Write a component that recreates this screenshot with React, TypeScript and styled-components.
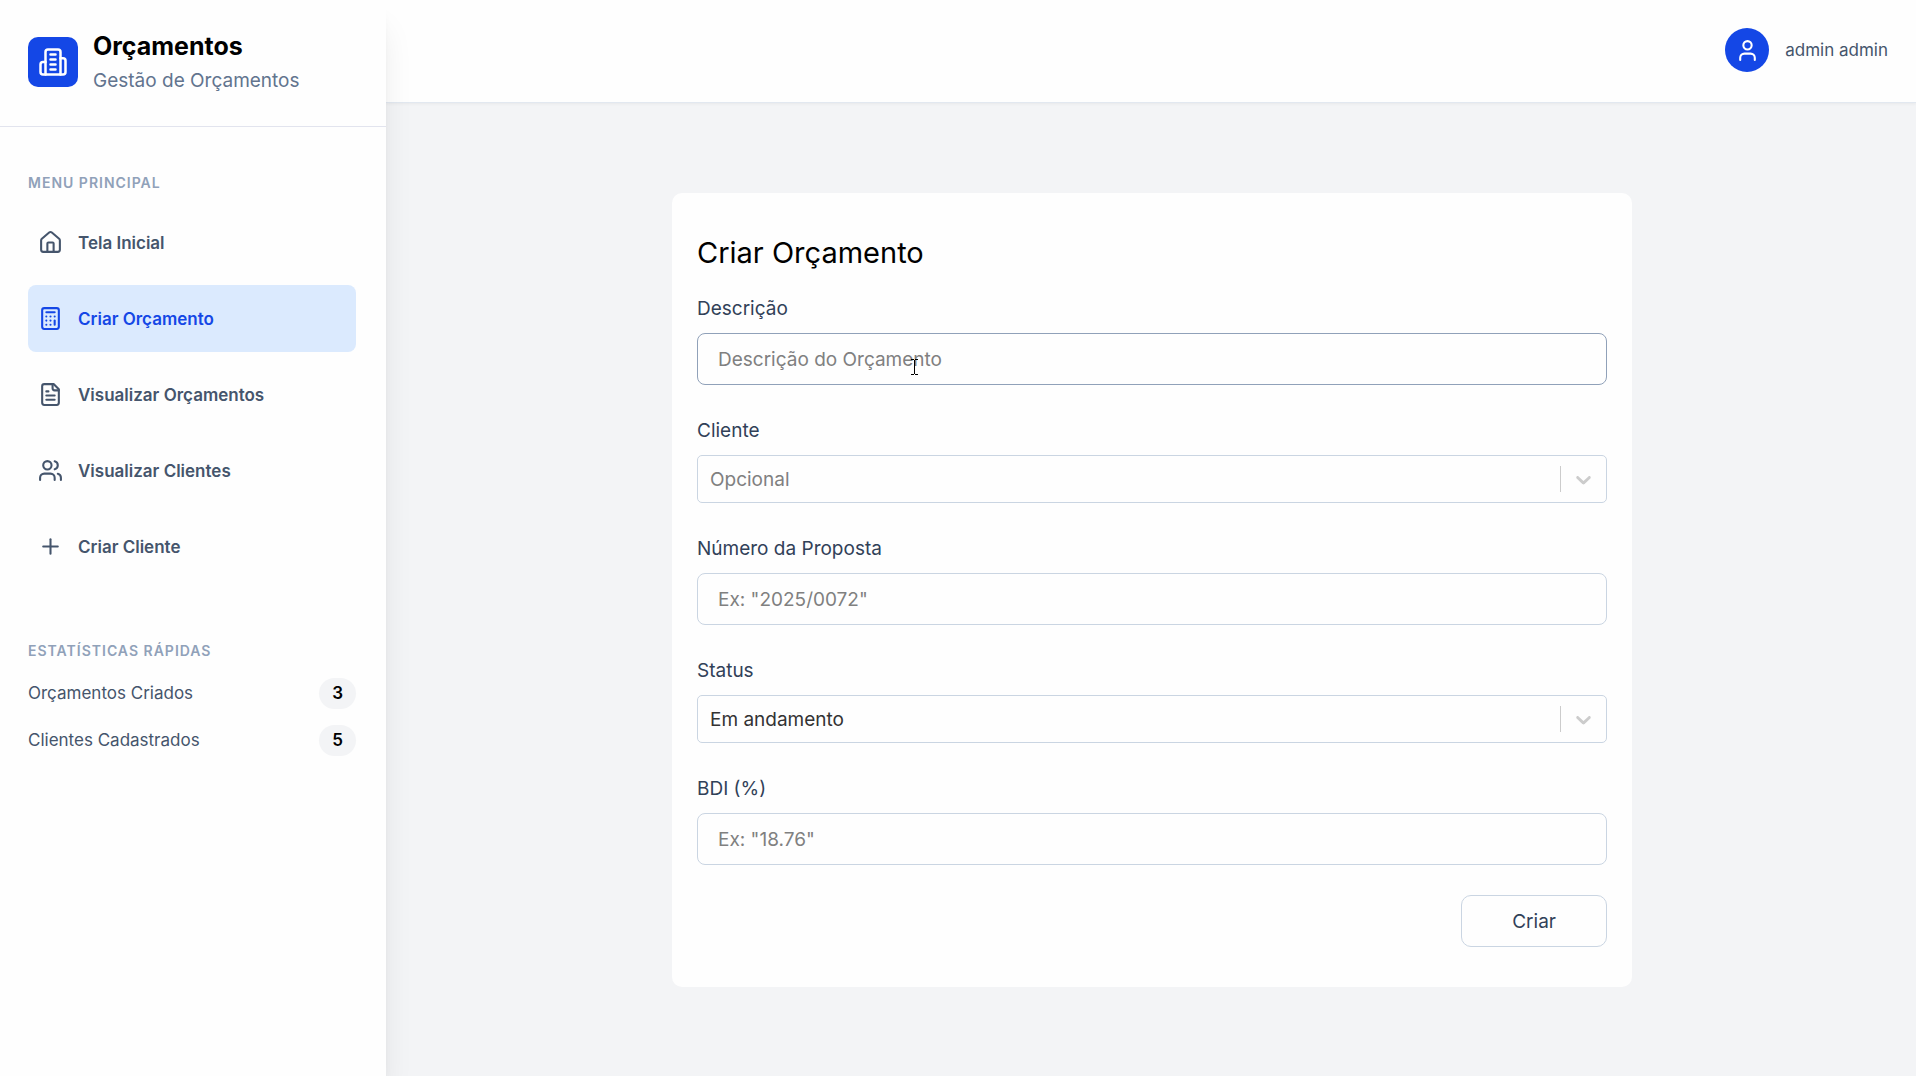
import React, { useId } from "react";
import styled, { createGlobalStyle } from "styled-components";
import { User, House, Calculator, Users, Plus } from "lucide-react";

const GlobalStyle = createGlobalStyle`
  *, *::before, *::after { box-sizing: border-box; }
  body {
    margin: 0;
    background: #f3f4f6;
    color: #000;
    font-family: Inter, "Liberation Sans", sans-serif;
    font-size: 19px;
  }
  button, input, select { font: inherit; }
  h1, h2, p, ul { margin: 0; padding: 0; }
  ul { list-style: none; }
`;

const Layout = styled.div`
  display: flex;
  min-height: 100vh;
`;

const Sidebar = styled.aside`
  position: relative;
  flex: 0 0 386px;
  background: #fefefe;
  box-shadow: 0 25px 31px -6px rgba(0, 0, 0, 0.1), 0 10px 12px -7px rgba(0, 0, 0, 0.1);
`;

const Brand = styled.div`
  display: flex;
  align-items: center;
  gap: 15px;
  padding: 27px 28px 29px;
  border-bottom: 1px solid #e2e4ee;
`;

const Logo = styled.div`
  display: grid;
  place-items: center;
  width: 50px;
  height: 50px;
  border-radius: 10px;
  background: #1447e6;
  color: #fff;
`;

const BrandName = styled.p`
  font-size: 25px;
  font-weight: 700;
  line-height: 38px;
`;

const BrandTagline = styled.p`
  color: #62748e;
  font-size: 19px;
  line-height: 32px;
`;

const Section = styled.section<{ $top: number }>`
  padding: ${(p) => p.$top}px 30px 0 28px;
`;

const SectionTitle = styled.h2`
  color: #90a1b9;
  font-size: 14px;
  font-weight: 600;
  line-height: 20px;
  letter-spacing: 1px;
  text-transform: uppercase;
`;

const Menu = styled.ul`
  display: flex;
  flex-direction: column;
  gap: 9px;
  padding-top: 16px;
`;

const MenuLink = styled.a<{ $active?: boolean }>`
  display: flex;
  align-items: center;
  gap: 15px;
  height: 67px;
  padding: 0 10px;
  border-radius: 8px;
  background: ${(p) => (p.$active ? "#dbeafe" : "transparent")};
  color: ${(p) => (p.$active ? "#1447e6" : "#45556c")};
  font-size: 17px;
  font-weight: 600;
  text-decoration: none;
`;

const StatList = styled.ul`
  display: flex;
  flex-direction: column;
  gap: 16px;
  padding-top: 17px;
`;

const Stat = styled.li`
  display: flex;
  align-items: center;
  justify-content: space-between;
  color: #45556c;
  font-size: 17px;
  line-height: 25px;
`;

const Badge = styled.span`
  padding: 3px 13px;
  border-radius: 16px;
  background: #f3f4f6;
  color: #000;
  font-weight: 600;
`;

const Content = styled.div`
  flex: 1;
  min-width: 0;
`;

const TopBar = styled.header`
  display: flex;
  justify-content: flex-end;
  align-items: center;
  gap: 16px;
  padding: 28px 28px 30px;
  border-bottom: 1px solid #e2e8f0;
  background: #fefefe;
  box-shadow: 0 1px 3px rgba(0, 0, 0, 0.05);
`;

const Avatar = styled.div`
  display: grid;
  place-items: center;
  width: 44px;
  height: 44px;
  border-radius: 50%;
  background: #1447e6;
  color: #fff;
`;

const UserName = styled.span`
  color: #45556c;
  font-size: 17px;
`;

const Main = styled.main`
  padding: 90px 24px 90px 26px;
`;

const Card = styled.form`
  max-width: 960px;
  margin: 0 auto;
  padding: 40px 25px;
  border-radius: 10px;
  background: #fefefe;
`;

const Title = styled.h1`
  margin-bottom: 20px;
  font-size: 29px;
  font-weight: 400;
  line-height: 40px;
`;

const Field = styled.div`
  display: flex;
  flex-direction: column;
  gap: 8px;
  margin-bottom: 30px;
`;

const Label = styled.label`
  color: #314158;
  line-height: 32px;
`;

const InputWrap = styled.div`
  position: relative;
`;

const Input = styled.input<{ $hovered?: boolean }>`
  display: block;
  width: 100%;
  height: 52px;
  padding: 0 20px;
  border: 1px solid ${(p) => (p.$hovered ? "#90a1b9" : "#cad5e2")};
  border-radius: 8px;
  outline: none;
  background: transparent;
  color: #314158;
  &::placeholder { color: #808080; opacity: 1; }
`;

const TextCursor = styled.svg`
  position: absolute;
  left: 214px;
  top: 26px;
  pointer-events: none;
`;

const SelectBox = styled.div`
  display: grid;
  grid-template-columns: 1fr 46px;
  align-items: center;
  height: 48px;
  border: 1px solid #cad5e2;
  border-radius: 5px;
`;

const Select = styled.select<{ $muted?: boolean }>`
  grid-area: 1 / 1 / 2 / 3;
  width: 100%;
  height: 100%;
  padding: 0 60px 0 12px;
  border: 0;
  outline: none;
  appearance: none;
  background: transparent;
  color: ${(p) => (p.$muted ? "#808080" : "#333")};
`;

const Indicator = styled.span`
  grid-area: 1 / 2 / 2 / 3;
  display: grid;
  place-items: center;
  height: 26px;
  border-left: 1px solid #ccc;
  color: #ccc;
  pointer-events: none;
`;

const Actions = styled.div`
  display: flex;
  justify-content: flex-end;
`;

const SubmitButton = styled.button`
  height: 52px;
  padding: 0 50px;
  border: 1px solid #cad5e2;
  border-radius: 10px;
  background: transparent;
  color: #314158;
`;

const BuildingIcon = () => (
  <svg width="30" height="30" viewBox="0 0 24 24" fill="none" stroke="currentColor" strokeWidth="2" strokeLinecap="round" strokeLinejoin="round" aria-hidden="true">
    <path d="M6 22V4a2 2 0 0 1 2-2h8a2 2 0 0 1 2 2v18Z" />
    <path d="M6 12H4a2 2 0 0 0-2 2v6a2 2 0 0 0 2 2h2" />
    <path d="M18 9h2a2 2 0 0 1 2 2v9a2 2 0 0 1-2 2h-2" />
    <path d="M10 6h4M10 10h4M10 14h4M10 18h4" />
  </svg>
);

const FileIcon = () => (
  <svg width="25" height="25" viewBox="0 0 24 24" fill="none" stroke="currentColor" strokeWidth="2" strokeLinecap="round" strokeLinejoin="round" aria-hidden="true">
    <path d="M15 2H6a2 2 0 0 0-2 2v16a2 2 0 0 0 2 2h12a2 2 0 0 0 2-2V7Z" />
    <path d="M14 2v4a2 2 0 0 0 2 2h4M10 9H8M16 13H8M16 17H8" />
  </svg>
);

const ChevronIcon = () => (
  <svg width="25" height="25" viewBox="0 0 20 20" fill="currentColor" aria-hidden="true">
    <path d="M4.516 7.548c0.436-0.446 1.043-0.481 1.576 0l3.908 3.747 3.908-3.747c0.533-0.481 1.141-0.446 1.574 0 0.436 0.445 0.408 1.197 0 1.615-0.406 0.418-4.695 4.502-4.695 4.502-0.217 0.223-0.502 0.335-0.787 0.335s-0.57-0.112-0.789-0.335c0 0-4.287-4.084-4.695-4.502s-0.436-1.17 0-1.615z" />
  </svg>
);

const menuItems = [
  { label: "Tela Inicial", icon: <House size={25} /> },
  { label: "Criar Orçamento", icon: <Calculator size={25} />, active: true },
  { label: "Visualizar Orçamentos", icon: <FileIcon /> },
  { label: "Visualizar Clientes", icon: <Users size={25} /> },
  { label: "Criar Cliente", icon: <Plus size={25} /> },
];

const stats = [
  { label: "Orçamentos Criados", value: 3 },
  { label: "Clientes Cadastrados", value: 5 },
];

function TextField({ label, placeholder, hovered }: { label: string; placeholder: string; hovered?: boolean }) {
  const id = useId();
  return (
    <Field>
      <Label htmlFor={id}>{label}</Label>
      <InputWrap>
        <Input id={id} type="text" placeholder={placeholder} $hovered={hovered} />
        {hovered && (
          <TextCursor width="7" height="16" viewBox="0 0 7 16" fill="none" stroke="#000" aria-hidden="true">
            <path d="M0 .5h3M4 .5h3M3.500 1v14M0 15.500h3M4 15.500h3" />
          </TextCursor>
        )}
      </InputWrap>
    </Field>
  );
}

function SelectField({ label, option, muted }: { label: string; option: string; muted?: boolean }) {
  const id = useId();
  return (
    <Field>
      <Label htmlFor={id}>{label}</Label>
      <SelectBox>
        <Select id={id} $muted={muted}>
          <option>{option}</option>
        </Select>
        <Indicator>
          <ChevronIcon />
        </Indicator>
      </SelectBox>
    </Field>
  );
}

export default function App() {
  return (
    <>
      <GlobalStyle />
      <Layout>
        <Sidebar>
          <Brand>
            <Logo>
              <BuildingIcon />
            </Logo>
            <div>
              <BrandName>Orçamentos</BrandName>
              <BrandTagline>Gestão de Orçamentos</BrandTagline>
            </div>
          </Brand>
          <Section as="nav" $top={46}>
            <SectionTitle>Menu Principal</SectionTitle>
            <Menu>
              {menuItems.map((item) => (
                <li key={item.label}>
                  <MenuLink href="#" $active={item.active} aria-current={item.active ? "page" : undefined}>
                    {item.icon}
                    {item.label}
                  </MenuLink>
                </li>
              ))}
            </Menu>
          </Section>
          <Section $top={61}>
            <SectionTitle>Estatísticas Rápidas</SectionTitle>
            <StatList>
              {stats.map((stat) => (
                <Stat key={stat.label}>
                  {stat.label}
                  <Badge>{stat.value}</Badge>
                </Stat>
              ))}
            </StatList>
          </Section>
        </Sidebar>
        <Content>
          <TopBar>
            <Avatar>
              <User size={25} />
            </Avatar>
            <UserName>admin admin</UserName>
          </TopBar>
          <Main>
            <Card onSubmit={(e) => e.preventDefault()}>
              <Title>Criar Orçamento</Title>
              <TextField label="Descrição" placeholder="Descrição do Orçamento" hovered />
              <SelectField label="Cliente" option="Opcional" muted />
              <TextField label="Número da Proposta" placeholder={'Ex: "2025/0072"'} />
              <SelectField label="Status" option="Em andamento" />
              <TextField label="BDI (%)" placeholder={'Ex: "18.76"'} />
              <Actions>
                <SubmitButton type="submit">Criar</SubmitButton>
              </Actions>
            </Card>
          </Main>
        </Content>
      </Layout>
    </>
  );
}
